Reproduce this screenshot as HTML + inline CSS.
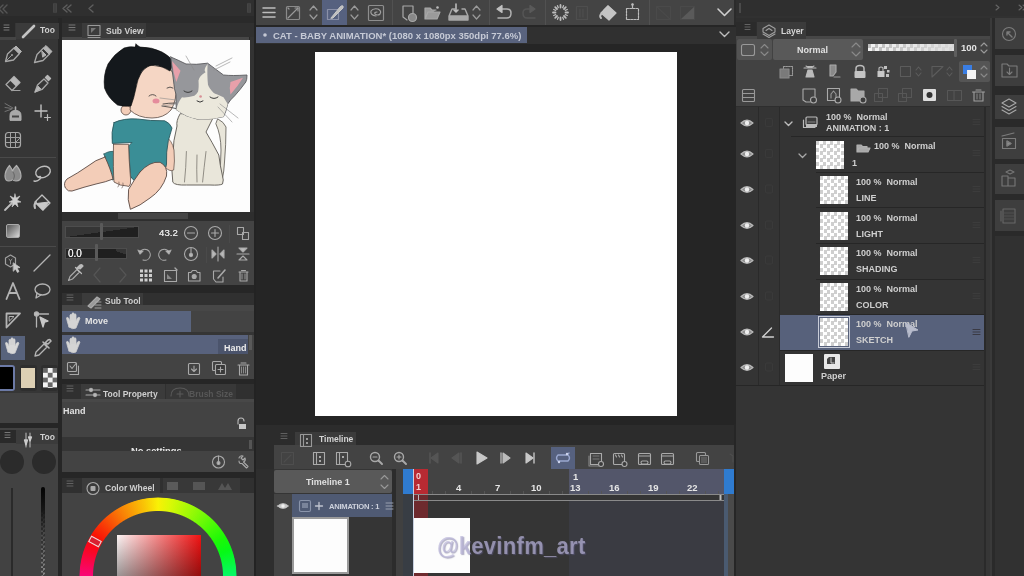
<!DOCTYPE html>
<html><head><meta charset="utf-8">
<style>
*{margin:0;padding:0;box-sizing:border-box}
html,body{width:1024px;height:576px;overflow:hidden;background:#2b2b2b;font-family:"Liberation Sans",sans-serif;color:#d8d8d8}
.a{position:absolute}
.t{position:absolute;white-space:nowrap;font-size:10px;line-height:1;will-change:transform}
svg{position:absolute;overflow:visible}
</style></head><body>
<!-- ===== top strip left ===== -->
<div class="a" style="left:0;top:0;width:256px;height:16px;background:#2f2f2f"></div>
<div class="a" style="left:0;top:16px;width:256px;height:7px;background:#2a2a2a"></div>
<!-- tool panel -->
<div class="a" style="left:0;top:23px;width:58px;height:400px;background:#363636"></div>
<div class="a" style="left:58px;top:18px;width:4px;height:558px;background:#262626"></div>
<!-- sub view panel -->
<div class="a" style="left:62px;top:23px;width:192px;height:262px;background:#434343"></div>
<div class="a" style="left:62px;top:23px;width:192px;height:14px;background:#303030"></div>
<div class="a" style="left:62px;top:37px;width:188px;height:3px;background:#474747"></div>
<div class="a" style="left:249px;top:37px;width:5px;height:176px;background:#333333"></div>
<div class="a" style="left:249px;top:37px;width:1px;height:176px;background:#2a2a2a"></div>
<div class="a" style="left:62px;top:40px;width:188px;height:172px;background:#fdfdfd"></div>
<div class="a" style="left:62px;top:212px;width:192px;height:9px;background:#2e2e2e"></div>
<!-- sub tool panel -->
<div class="a" style="left:62px;top:285px;width:192px;height:8px;background:#262626"></div>
<div class="a" style="left:62px;top:293px;width:192px;height:86px;background:#434343"></div>
<div class="a" style="left:62px;top:293px;width:192px;height:12px;background:#303030"></div>
<div class="a" style="left:62px;top:311px;width:129px;height:21px;background:#59647e"></div>
<div class="a" style="left:62px;top:335px;width:186px;height:19px;background:#58627d"></div>
<!-- tool property -->
<div class="a" style="left:62px;top:379px;width:192px;height:5px;background:#262626"></div>
<div class="a" style="left:62px;top:384px;width:192px;height:88px;background:#434343"></div>
<div class="a" style="left:62px;top:384px;width:192px;height:15px;background:#303030"></div>
<div class="a" style="left:62px;top:437px;width:192px;height:14px;background:#353535"></div>
<!-- color wheel -->
<div class="a" style="left:62px;top:472px;width:192px;height:6px;background:#262626"></div>
<div class="a" style="left:62px;top:478px;width:192px;height:98px;background:#434343"></div>
<div class="a" style="left:62px;top:478px;width:192px;height:15px;background:#303030"></div>
<!-- left bottom panel -->
<div class="a" style="left:0;top:423px;width:58px;height:5px;background:#262626"></div>
<div class="a" style="left:0;top:428px;width:58px;height:148px;background:#424242"></div>

<!-- ===== canvas area ===== -->
<div class="a" style="left:254px;top:0;width:2px;height:576px;background:#232323"></div>
<div class="a" style="left:256px;top:0;width:478px;height:26px;background:#444444"></div>
<div class="a" style="left:256px;top:26px;width:480px;height:18px;background:#303030"></div>
<div class="a" style="left:256px;top:27px;width:271px;height:16px;background:#59637e"></div>
<div class="a" style="left:256px;top:44px;width:480px;height:381px;background:#252525"></div>
<div class="a" style="left:315px;top:52px;width:362px;height:363.5px;background:#ffffff"></div>

<!-- ===== timeline ===== -->
<div class="a" style="left:256px;top:425px;width:480px;height:151px;background:#2c2c2c"></div>
<div class="a" style="left:274px;top:445px;width:461px;height:24px;background:#434343"></div>
<div class="a" style="left:274px;top:469px;width:461px;height:107px;background:#343434"></div>
<div class="a" style="left:274px;top:470px;width:118px;height:23px;background:#4a4a4a"></div>

<!-- ===== layer panel ===== -->
<div class="a" style="left:736px;top:0;width:288px;height:16px;background:#2f2f2f"></div><div class="a" style="left:736px;top:16px;width:288px;height:2px;background:#313131"></div>
<div class="a" style="left:736px;top:18px;width:257px;height:558px;background:#333333"></div>
<div class="a" style="left:736px;top:18px;width:257px;height:21px;background:#2e2e2e"></div>
<div class="a" style="left:736px;top:39px;width:254px;height:68px;background:#424242"></div>
<div class="a" style="left:780px;top:315px;width:205px;height:35px;background:#57617b"></div>
<!-- right column -->
<div class="a" style="left:990px;top:18px;width:34px;height:558px;background:#262626"></div>


<!-- ===== left tool column ===== -->
<div class="a" style="left:0;top:23px;width:15px;height:14px;background:#2a2a2a"></div>
<div class="a" style="left:16px;top:23px;width:43px;height:16px;background:#3b3b3b"></div>
<div class="a" style="left:0;top:37px;width:16px;height:3px;background:#444"></div>
<div class="t" style="left:40px;top:26px;font-size:8.5px;font-weight:bold;color:#cfcfcf;width:18px;overflow:hidden">Too</div>
<div class="a" style="left:1px;top:336px;width:24px;height:24px;background:#58637c"></div>
<div class="a" style="left:0;top:365px;width:15px;height:26px;background:#000;border:2px solid #6c7aa6;border-left:none;border-radius:0 3px 3px 0"></div>
<div class="a" style="left:20px;top:365px;width:17px;height:26px;background:#2e2e2e;border-radius:3px"></div>
<div class="a" style="left:21px;top:368px;width:14px;height:20px;background:#ddd0b4"></div>
<div class="a" style="left:41px;top:365px;width:17px;height:26px;background:#2e2e2e;border-radius:3px"></div>
<div class="a" style="left:43px;top:368px;width:14px;height:20px;background:repeating-conic-gradient(#f4f4f4 0 25%,#666 0 50%) 0 0/9.6px 9.6px"></div>
<div class="a" style="left:0;top:393px;width:58px;height:30px;background:#434343"></div>
<div class="a" style="left:0;top:157px;width:56px;height:1px;background:#4a4a4a"></div>
<div class="a" style="left:0;top:246px;width:56px;height:1px;background:#4a4a4a"></div>
<svg class="a" style="left:0;top:0" width="1024" height="576" viewBox="0 0 1024 576" fill="none" stroke="#bdbdbd" stroke-width="1.4" stroke-linecap="round" stroke-linejoin="round">
 <!-- top chevrons/grips -->
 <path d="M3 5 L-1 9 L3 13 M7 5 L3 9 L7 13" stroke="#555"/>
 <rect x="53" y="3" width="4" height="10" rx="1" fill="#454545" stroke="none"/><path d="M55 3 V13" stroke="#3a3a3a" stroke-width="0.8"/>
 <path d="M67 5 L63 8.5 L67 12 M71 5 L67 8.5 L71 12" stroke="#5e5e5e"/>
 <path d="M93 5 L89 8.5 L93 12" stroke="#5e5e5e"/>
 <rect x="247" y="3" width="4" height="10" rx="1" fill="#454545" stroke="none"/><path d="M249 3 V13" stroke="#3a3a3a" stroke-width="0.8"/>
 <path d="M4 25 H9 M4 27.5 H9 M4 30 H9" stroke="#777" stroke-width="1"/>
 <path d="M23 37 L34 26" stroke="#c4c4c4" stroke-width="2.6"/>
 <path d="M69 25 H75 M69 27.5 H75 M69 30 H75" stroke="#777" stroke-width="1"/>
 <!-- pen1 -->
 <path d="M5.5 61.5 L7.5 54 L14 48 L19.5 53.5 L13.5 60 Z" stroke="#a8a8a8" stroke-width="1.3"/>
 <path d="M14 48 L16 46 L21.5 51.5 L19.5 53.5 Z" fill="#b0b0b0" stroke="#b0b0b0" stroke-width="1"/>
 <path d="M6 61 L11.5 55.5" stroke="#a0a0a0" stroke-width="1"/><circle cx="12" cy="55" r="1" fill="#a0a0a0" stroke="none"/>
 <!-- pen2 -->
 <path d="M34.5 62.5 L37 54.5 L43.5 48 L49.5 54 L43 60.5 Z" stroke="#a8a8a8" stroke-width="1.3"/>
 <path d="M43.5 48 L46 45.5 L52 51.5 L49.5 54 Z M42 51 L46 55 L43 57 Z" fill="#b4b4b4" stroke="#b4b4b4" stroke-width="1"/>
 <!-- eraser -->
 <path d="M6 84.5 L14 76.5 L20 82.5 L12 90.5 Z" stroke="#a8a8a8" stroke-width="1.3"/>
 <path d="M10 80.5 L14 76.5 L20 82.5 L16 86.5 Z" fill="#b8b8b8" stroke="none"/>
 <path d="M12 90.5 H20" stroke="#a0a0a0" stroke-width="1.2"/>
 <!-- pen3 -->
 <path d="M35 92 L37.5 85 L44 79 L48 83 L42 89.5 Z" stroke="#a8a8a8" stroke-width="1.3"/>
 <path d="M45.5 77.5 L47.5 75.5 L50.5 78.5 L48.5 80.5 Z" fill="#b8b8b8" stroke="#b8b8b8"/>
 <path d="M35 92 L38 86 L41 89 Z" fill="#b8b8b8" stroke="#b8b8b8" stroke-width="0.8"/>
 <!-- airbrush -->
 <path d="M10 120 V115.5 Q10 110.5 15.5 110.5 Q21 110.5 21 115.5 V120 Z" fill="#a8a8a8" stroke="#b0b0b0" stroke-width="1"/>
 <rect x="12" y="115.5" width="7" height="2" fill="#444" stroke="none"/>
 <path d="M15.5 107 V110" stroke="#b0b0b0" stroke-width="1.6"/>
 <path d="M5 103.5 L13 108 M5 107.5 L12 108.5 M5 111.5 L12 109" stroke="#7a7a7a" stroke-width="0.9"/>
 <!-- sparkle -->
 <path d="M41 105 V117 M35 111 H47" stroke="#c0c0c0" stroke-width="1.4"/>
 <path d="M47.5 114.5 V120.5 M44.5 117.5 H50.5" stroke="#b8b8b8" stroke-width="1.2"/>
 <!-- grid -->
 <rect x="5.5" y="132.5" width="15" height="15" rx="3" stroke="#a8a8a8" stroke-width="1.2"/>
 <path d="M10.5 133 V147 M15.5 133 V147 M6 137.5 H20 M6 142.5 H20" stroke-width="1" stroke="#a0a0a0"/>
 <path d="M15.5 142.5 L20 138" stroke="#a0a0a0" stroke-width="1"/>
 <!-- blend -->
 <path d="M5 176 Q5 171 9.5 165.5 Q12 169 12.5 171 Q13.5 168.5 16.5 165.5 Q21 171 21 176 Q21 181 16 181 Q13.5 181 12.5 179.5 Q11.5 181 9 181 Q5 181 5 176 Z" fill="#8a8a8a" stroke="#b0b0b0" stroke-width="1.2"/>
 <path d="M13 172 Q16 176 13 180" stroke="#5a5a5a" stroke-width="0.8"/>
 <!-- lasso -->
 <ellipse cx="43" cy="172" rx="7.5" ry="5.5" transform="rotate(-20 43 172)"/>
 <path d="M38 177 Q42 175 40 179 Q37 182 34 181" />
 <!-- wand -->
 <path d="M5 210 L12 203" stroke-width="1.8"/>
 <path d="M15 194 L16 198 L20 196 L17 200 L21 202 L17 202.5 L18 207 L15 204 L12 207 L13 202.5 L9 202 L13 200 L10 196 L14 198 Z" fill="#d0d0d0" stroke="#d0d0d0" stroke-width="0.6"/>
 <!-- bucket -->
 <path d="M42 195 L50 203 L43 210 L35 202 Z" stroke="#c0c0c0" stroke-width="1.3"/>
 <path d="M36.5 203.5 L49 202 L43 210 Z" fill="#c8c8c8" stroke="#c8c8c8" stroke-width="1"/>
 <path d="M36 202 Q33.5 205 35 208" stroke="#c0c0c0" stroke-width="2"/>
</svg>

<!-- left col part 2 -->
<div class="a" style="left:6px;top:224px;width:14px;height:14px;border-radius:2px;background:linear-gradient(135deg,#555 0%,#9a9a9a 55%,#d8d8d8 100%);border:1px solid #aaa"></div>
<div class="a" style="left:0;top:430px;width:16px;height:13px;background:#2a2a2a"></div>
<div class="a" style="left:16px;top:430px;width:42px;height:14px;background:#3b3b3b"></div>
<div class="t" style="left:40px;top:433px;font-size:8.5px;font-weight:bold;color:#cfcfcf;width:18px;overflow:hidden">Too</div>
<div class="a" style="left:0px;top:450px;width:24px;height:24px;border-radius:50%;background:#2b2b2b"></div>
<div class="a" style="left:31.5px;top:450px;width:24px;height:24px;border-radius:50%;background:#2b2b2b"></div>
<div class="a" style="left:10.5px;top:488px;width:2.5px;height:88px;background:#2a2a2a"></div>
<div class="a" style="left:40.5px;top:487px;width:4.5px;height:89px;border-radius:2px;background:linear-gradient(#030303 0%,#151515 25%,rgba(40,40,40,.6) 55%,rgba(60,60,60,0) 100%),repeating-conic-gradient(#8a8a8a 0 25%,#3e3e3e 0 50%) 0 0/4.5px 4.5px"></div>
<svg class="a" style="left:0;top:0" width="1024" height="576" viewBox="0 0 1024 576" fill="none" stroke="#b4b4b4" stroke-width="1.3" stroke-linecap="round" stroke-linejoin="round">
 <path d="M5 432.5 H10 M5 435 H10 M5 437.5 H10" stroke="#777" stroke-width="1"/>
 <path d="M26 433 V447 M30 433 V447" stroke="#aaa" stroke-width="1.2"/>
 <path d="M24.5 440 L26 445 L27.5 440 Z M28.5 437 L30 441 L31.5 437Z" fill="#ccc" stroke="#ccc"/>
 <!-- figure -->
 <path d="M10.5 255 L15.5 258 L15.5 264 L10.5 267 L5.5 264 L5.5 258 Z" stroke="#a0a0a0" stroke-width="1.2"/>
 <path d="M9 259 L10.5 261 L12 259 M10.5 261 V264" stroke="#999" stroke-width="0.9"/>
 <path d="M13.5 263 L20 267.5 L17 268 L19 271.5 L17.5 272.5 L15.5 269 L13.5 271 Z" fill="#c8c8c8" stroke="#c8c8c8" stroke-width="0.8"/>
 <!-- line -->
 <path d="M34 271 L50 255"/>
 <!-- A -->
 <path d="M6.5 299 L13 283 L19.5 299 M9 293 H17" stroke-width="1.8"/>
 <!-- bubble -->
 <ellipse cx="42.5" cy="289.5" rx="7.5" ry="5.5"/>
 <path d="M37 293 L36 298 L41 295"/>
 <!-- ruler -->
 <path d="M6.5 313.5 H20 L6.5 327.5 Z" stroke-width="1.8"/>
 <path d="M9.5 316.5 H14 L9.5 321 Z" stroke-width="1"/>
 <!-- ruler select -->
 <circle cx="36.5" cy="314" r="2" fill="#bbb"/>
 <path d="M36.5 316 V327 M38 314 H48.5" />
 <path d="M40 317 L48 321 L44.5 322 L43 327 Z" fill="#c8c8c8" stroke="#c8c8c8"/>
 <!-- hand -->
 <path d="M8 352 Q6 346 5.5 343 Q6 341.5 7.5 343 L9 346 V340 Q10 338.5 11 340 V345 V338.5 Q12 337 13 338.5 V345 V339.5 Q14 338 15 339.5 V346 L16.5 343 Q18 341.5 19 343 Q17 348 15 353 Q12 355 8 352 Z" fill="#d8d8d8" stroke="#d0d0d0" stroke-width="0.8"/>
 <!-- eyedropper -->
 <path d="M35 356 L36 352 L44 344 L47 347 L39 355 Z"/>
 <path d="M45 343 L48 340 Q50 339 51 341 L48 344 Z M43 342 L49 348" stroke-width="1.6"/>
</svg>

<!-- ===== sub view illustration ===== -->
<svg class="a" style="left:0;top:0" width="1024" height="576" viewBox="0 0 1024 576" stroke-linejoin="round" stroke-linecap="round">
 <!-- cat tail -->
 <path d="M218 119 Q224 122 226 127 Q226 145 224.5 162 Q224 172 222.5 178 L219 176 Q221 165 221 150 Q221 135 216 124 Z" fill="#e9e6da" stroke="#6a6660" stroke-width="0.9"/>
 <!-- cat body -->
 <path d="M180 114 Q176 121 177 126 Q173 140 172.8 157 Q171 170 172.8 182.2 Q175 185.5 186.4 185 L210 185 Q220 185.5 222.5 184 Q224 180 222.5 176 Q220 165 218.8 155 Q212 142 206 132 Q210 124 214 116 Z" fill="#e9e6da" stroke="#6a6660" stroke-width="1"/>
 <path d="M186.4 151.5 Q186 168 184.5 182 M197 155 Q196.5 170 197 182 M206 151.5 Q204 168 202.6 182" fill="none" stroke="#7a766e" stroke-width="0.8"/>
 <!-- right arm behind -->
 <path d="M166 137 Q172 140 174 150 Q175 162 173.7 170 Q170 172 166 168 Z" fill="#f3cdb8" stroke="#5a4a44" stroke-width="0.7"/>
 <!-- shorts -->
 <path d="M104 154 Q110 150 116 152 L118 178 L112 180 Q107 166 104 154Z" fill="#3a8e96" stroke="#2d5a60" stroke-width="0.8"/>
 <!-- left leg -->
 <path d="M105 157 Q95 160 88 166 Q78 173 67 179 Q63 183 65.4 188 Q68 192 72 191 Q84 187 96 184 Q106 182 113 179 Q111 170 105 157 Z" fill="#f3cdb8" stroke="#5a4a44" stroke-width="0.9"/>
 <!-- shirt -->
 <path d="M114 122.6 Q124 118 137.6 119 Q150 121 164.7 120.8 Q170 123 172 128 Q170 135 168.3 140.7 Q166 152 166.5 164 Q166 170 160 172 Q148 176 137.6 182.2 Q132 180 130.4 176 L128.6 146 L132 142.5 L112.3 143.4 Q111 132 114 122.6 Z" fill="#3a8e96" stroke="#2d5a60" stroke-width="0.9"/>
 <!-- right leg -->
 <path d="M140 172 Q150 161 160 162.3 Q168 166 166.5 176 Q162 190 150 198 Q140 206 130.4 209.3 Q127 200 128.6 189.4 Q134 180 140 172 Z" fill="#f3cdb8" stroke="#5a4a44" stroke-width="0.9"/>
 <!-- arm -->
 <path d="M113.5 144.3 L128.6 144.3 Q129 160 130 172 Q131 180 130.4 184 Q129 188 127 186 Q120 186 114 182 Q113 170 113.5 144.3Z" fill="#f3cdb8" stroke="#5a4a44" stroke-width="0.8"/>
 <path d="M119 182 Q120 185 118 187 M123 183 Q124 186 122 188" fill="none" stroke="#5a4a44" stroke-width="0.6"/>
 <!-- ear -->
 <circle cx="126" cy="110" r="5" fill="#f3cdb8" stroke="#5a4a44" stroke-width="0.8"/>
 <!-- face -->
 <path d="M134 88 Q138 72 150 65 L170 68 Q176 76 176 86 Q177 100 171 110 Q164 118 152 118 Q138 118 130 110 Q131 98 134 88 Z" fill="#f5d6c4" stroke="#5a4a44" stroke-width="0.8"/>
 <!-- hair -->
 <path d="M136 44 Q138 46 140 47 Q152 47 162 52 Q170 56 173 62 Q172 68 170 71 Q162 66 155 65 Q147 65 142 71 Q137 80 136 88 Q134 98 131 106 Q124 107 117.5 105 Q108 98 104.5 88 Q103 75 108 64 Q114 54 124 48 Q130 46 135 47 Z" fill="#14181c" stroke="#0a0a0a" stroke-width="0.6"/>
 <!-- eyes/cheeks -->
 <path d="M149 96 Q152.5 93 156 96 M167 88 Q170 86 173 88 M163 104 Q168 103 176 103 M162 106 Q170 107 178 109" fill="none" stroke="#333" stroke-width="0.8"/>
 <ellipse cx="156" cy="101" rx="3.5" ry="2.5" fill="#e58c9c"/>
 <!-- cat head -->
 <path d="M170.8 57 Q178 60 186 64 Q196 65 207.6 63.2 Q214 68 223.5 75 Q232 76 247 75 Q247 80 245.8 82 Q240 90 234.7 95.8 Q230 100 227.7 104 Q226 112 223.5 116.7 Q210 120 197 119 Q186 117 176.3 109.7 Q176 102 176 94.4 Q174 88 174 84.7 Q172 70 170.8 57 Z" fill="#96979b" stroke="#5a5a5e" stroke-width="0.9"/>
 <path d="M207.6 64 Q203 70 205.5 72.2 Q199 76 198.5 80.5 Q199 88 198 91.7 Q196 95 194.4 95.8 Q186 98 182 97.2 Q178 102 176.3 109.7 Q186 117 197 119 Q210 120 223.5 116.7 Q226 110 227.7 104 Q224 98 223.5 97.2 Q216 94 213.8 93 Q209 88 208 84.7 Q207 76 207.6 64 Z" fill="#ebe8dc"/>
 <path d="M172 61 L180.5 70.8 L176.3 82 Q173 72 172 61 Z M243 77.8 L230.5 82 Q229 88 230.5 94.4 Q238 86 243 77.8 Z" fill="#e8a0aa"/>
 <path d="M184 91 Q188 94 192 91 M210 97 Q214 100 218 97 M197 101 Q200 103.5 203 101" fill="none" stroke="#3a3a3a" stroke-width="1"/>
 <circle cx="200.6" cy="96.5" r="1.3" fill="#d89096"/>
 <path d="M186 56 L194 70 M214 70 L230 62 M216 66 L232 58 M220 104 L238 118 M218 107 L232 122 M176 100 L160 98 M176 104 L162 106" fill="none" stroke="#8a8a8a" stroke-width="0.6"/>
</svg>

<!-- ===== sub view tab & controls ===== -->
<div class="a" style="left:82px;top:23px;width:64px;height:15px;background:#3b3b3b"></div>
<div class="t" style="left:106px;top:27px;font-size:8.5px;font-weight:bold;color:#cfcfcf">Sub View</div>
<div class="a" style="left:118px;top:213px;width:70px;height:6px;background:#454545"></div>
<div class="a" style="left:65px;top:226px;width:74px;height:12px;border:1px solid #4d4d4d;background:#353535"></div>
<div class="a" style="left:66px;top:227px;width:72px;height:10px;background:linear-gradient(to bottom right,transparent 50%,#202020 50%)"></div>
<div class="a" style="left:100px;top:223px;width:3px;height:17px;background:#5a5a5a;border-radius:1px"></div>
<div class="a" style="left:65px;top:248px;width:62px;height:11px;border:1px solid #4d4d4d;background:#353535"></div>
<div class="a" style="left:98px;top:249px;width:28px;height:9px;background:linear-gradient(to bottom left,transparent 30%,#1f1f1f 30%)"></div>
<div class="a" style="left:98px;top:249px;width:18px;height:9px;background:#1f1f1f"></div>
<div class="a" style="left:66px;top:249px;width:30px;height:9px;background:#262626"></div>
<div class="a" style="left:95px;top:244px;width:3px;height:17px;background:#5a5a5a;border-radius:1px"></div>
<div class="t" style="left:68px;top:249px;font-size:10px;color:#ececec;text-shadow:0 0 0.4px #fff">0.0</div>
<div class="t" style="left:158.5px;top:227.5px;font-size:9.7px;color:#e0e0e0;text-shadow:0 0 0.4px #fff">43.2</div>
<div class="a" style="left:229px;top:225px;width:1px;height:18px;background:#4a4a4a"></div>
<div class="a" style="left:206px;top:247px;width:1px;height:16px;background:#4a4a4a"></div>
<svg class="a" style="left:0;top:0" width="1024" height="576" viewBox="0 0 1024 576" fill="none" stroke="#a9a9a9" stroke-width="1.1" stroke-linecap="round" stroke-linejoin="round">
 <!-- sub view tab icon -->
 <rect x="88" y="25.5" width="12" height="10" stroke="#999"/><path d="M88 37.5 H100" stroke="#999"/>
 <path d="M91 28 V33 L96 28 Z" fill="#777" stroke="none"/>
 <!-- row1 -->
 <circle cx="191" cy="233" r="6.5"/><path d="M187.5 233 H194.5"/>
 <circle cx="215" cy="233" r="6.5"/><path d="M211.5 233 H218.5 M215 229.5 V236.5"/>
 <rect x="237.5" y="227.5" width="6" height="7"/><rect x="242.5" y="232.5" width="6" height="7"/>
 <!-- row2 -->
 <path d="M140 252 A5.5 5.5 0 1 1 143 260" /><path d="M138 250 L140 254 L143 251" fill="#bbb"/>
 <path d="M169 252 A5.5 5.5 0 1 0 166 260" /><path d="M171 250 L169 254 L166 251" fill="#bbb"/>
 <circle cx="191" cy="254" r="6.5"/><circle cx="191" cy="255" r="1.6" fill="#bbb"/><path d="M191 248 V254"/>
 <path d="M212 250 L216 254 L212 258 Z M224 250 L220 254 L224 258 Z" fill="#bbb"/><path d="M218 247 V261"/>
 <path d="M239 248 H247 L243 252 Z" fill="#bbb"/><path d="M237 254 H249"/><path d="M239 260 H247 L243 256 Z"/>
 <!-- row3 -->
 <path d="M68.5 280.5 L70 276.5 L77 269.5 L79.5 272 L72.5 279 Z" stroke="#aaa" stroke-width="1.1"/><path d="M77 268 L80 265 Q82 264 83 266 L80 269 Z M75.5 267.5 L81.5 273.5" fill="#bbb" stroke="#bbb" stroke-width="1.2"/>
 <path d="M100 268 L94 275 L100 282 M120 268 L126 275 L120 282" stroke="#555" stroke-width="1.2"/>
 <g fill="#cfcfcf" stroke="none"><rect x="140" y="269.5" width="3" height="3"/><rect x="144.5" y="269.5" width="3" height="3"/><rect x="149" y="269.5" width="3" height="3"/><rect x="140" y="274" width="3" height="3"/><rect x="144.5" y="274" width="3" height="3"/><rect x="149" y="274" width="3" height="3"/><rect x="140" y="278.5" width="3" height="3"/><rect x="144.5" y="278.5" width="3" height="3"/><rect x="149" y="278.5" width="3" height="3"/></g>
 <rect x="164.5" y="270.5" width="12" height="11"/><path d="M167 279 V274 L172 279 Z" fill="#888" stroke="none"/><path d="M175 268 L177 270" stroke-width="1.4"/>
 <path d="M188.5 272.5 H191 L192.5 270.5 H196 L197.5 272.5 H200 V281 H188.5 Z"/><circle cx="194.2" cy="276.5" r="2" fill="#aaa"/>
 <path d="M214 271 H220 M213.5 271 V279 L216 282 H223 V277"/><path d="M218 278 L225 270" stroke-width="1.6"/>
 <path d="M239 272 H248 M240 272 V281 H247 V272 M241.5 270.5 H245.5"/><path d="M242 274 V279 M245 274 V279" stroke-width="0.8"/>
</svg>

<!-- ===== sub tool ===== -->
<div class="a" style="left:82px;top:293px;width:61px;height:13px;background:#3b3b3b"></div>
<div class="t" style="left:105px;top:297px;font-size:8.5px;font-weight:bold;color:#cfcfcf">Sub Tool</div>
<div class="a" style="left:62px;top:305px;width:192px;height:6px;background:#474747"></div>
<div class="a" style="left:62px;top:332px;width:192px;height:3px;background:#353535"></div>
<div class="t" style="left:85px;top:317px;font-size:9px;font-weight:bold;color:#e4e4e4">Move</div>
<div class="a" style="left:218px;top:339px;width:30px;height:15px;background:#4b546c"></div>
<div class="t" style="left:223.5px;top:343.5px;font-size:9px;font-weight:bold;color:#ececec">Hand</div>
<div class="a" style="left:249px;top:335px;width:3px;height:15px;background:#5a5a5a"></div>
<!-- tool property -->
<div class="a" style="left:81px;top:384px;width:84px;height:15px;background:#3b3b3b"></div>
<div class="a" style="left:166px;top:384px;width:70px;height:15px;background:#383838"></div>
<div class="t" style="left:103px;top:390px;font-size:8.5px;font-weight:bold;color:#cfcfcf">Tool Property</div>
<div class="t" style="left:189px;top:390px;font-size:8.5px;font-weight:bold;color:#575757">Brush Size</div>
<div class="a" style="left:62px;top:399px;width:192px;height:3px;background:#484848"></div>
<div class="t" style="left:63px;top:407px;font-size:9px;font-weight:bold;color:#e0e0e0">Hand</div>
<div class="a" style="left:62px;top:437px;width:192px;height:14px;overflow:hidden"><div class="t" style="left:69px;top:10px;font-size:9.3px;font-weight:bold;color:#e8e8e8">No settings</div></div>
<div class="a" style="left:249px;top:440px;width:3px;height:9px;background:#555"></div>
<!-- color wheel -->
<div class="a" style="left:82px;top:478px;width:78px;height:15px;background:#3b3b3b"></div>
<div class="a" style="left:163px;top:478px;width:77px;height:15px;background:#383838"></div>
<div class="t" style="left:105px;top:484px;font-size:8.5px;font-weight:bold;color:#cfcfcf">Color Wheel</div>
<div class="a" style="left:62px;top:478px;width:192px;height:98px;overflow:hidden;pointer-events:none">
  <div class="a" style="left:17.3px;top:19.3px;width:157.4px;height:157.4px;border-radius:50%;background:conic-gradient(hsl(58,95%,50%) 0deg,hsl(68,95%,50%) 10deg,hsl(77,95%,50%) 20deg,hsl(86,95%,50%) 30deg,hsl(96,95%,50%) 40deg,hsl(106,95%,50%) 50deg,hsl(115,95%,50%) 60deg,hsl(124,95%,50%) 70deg,hsl(134,95%,50%) 80deg,hsl(144,95%,50%) 90deg,hsl(153,95%,50%) 100deg,hsl(162,95%,50%) 110deg,hsl(172,95%,50%) 120deg,hsl(182,95%,50%) 130deg,hsl(191,95%,50%) 140deg,hsl(200,95%,50%) 150deg,hsl(210,95%,50%) 160deg,hsl(220,95%,50%) 170deg,hsl(229,95%,50%) 180deg,hsl(256,95%,50%) 190deg,hsl(266,95%,50%) 200deg,hsl(276,95%,50%) 210deg,hsl(285,95%,50%) 220deg,hsl(294,95%,50%) 230deg,hsl(304,95%,50%) 240deg,hsl(314,95%,50%) 250deg,hsl(323,95%,50%) 260deg,hsl(332,95%,50%) 270deg,hsl(342,95%,50%) 280deg,hsl(352,95%,50%) 290deg,hsl(1,95%,50%) 300deg,hsl(10,95%,50%) 310deg,hsl(20,95%,50%) 320deg,hsl(30,95%,50%) 330deg,hsl(39,95%,50%) 340deg,hsl(48,95%,50%) 350deg,hsl(58,95%,50%) 360deg);-webkit-mask:radial-gradient(circle,transparent 64.5px,#000 65.5px,#000 78px,transparent 79px);mask:radial-gradient(circle,transparent 64.5px,#000 65.5px,#000 78px,transparent 79px)"></div>
  <div class="a" style="left:54.5px;top:56.5px;width:84px;height:45px;background:linear-gradient(to bottom,rgba(0,0,0,0),rgba(0,0,0,.42)),linear-gradient(to right,#fbf4f4,#f01212)"></div>
</div>
<div class="a" style="left:89px;top:538px;width:12px;height:7px;border:1.5px solid #f0d8d8;background:#d82030;transform:rotate(28deg)"></div>
<svg class="a" style="left:0;top:0" width="1024" height="576" viewBox="0 0 1024 576" fill="none" stroke="#a9a9a9" stroke-width="1.1" stroke-linecap="round" stroke-linejoin="round">
 <path d="M67 295 H73 M67 297.5 H73 M67 300 H73" stroke="#666" stroke-width="0.9"/>
 <path d="M88 306 L97 297 L100 299 L91 308 Z" fill="#999"/><path d="M95 302 H101 M95 305 H101 M95 308 H101" stroke-width="0.9"/>
 <!-- move hand -->
 <g transform="translate(61,-25)" fill="#d4d4d4" stroke="#cfcfcf" stroke-width="0.8"><path d="M8 352 Q6 346 5.5 343 Q6 341.5 7.5 343 L9 346 V340 Q10 338.5 11 340 V345 V338.5 Q12 337 13 338.5 V345 V339.5 Q14 338 15 339.5 V346 L16.5 343 Q18 341.5 19 343 Q17 348 15 353 Q12 355 8 352 Z"/></g>
 <g transform="translate(61,-1)" fill="#d4d4d4" stroke="#cfcfcf" stroke-width="0.8"><path d="M8 352 Q6 346 5.5 343 Q6 341.5 7.5 343 L9 346 V340 Q10 338.5 11 340 V345 V338.5 Q12 337 13 338.5 V345 V339.5 Q14 338 15 339.5 V346 L16.5 343 Q18 341.5 19 343 Q17 348 15 353 Q12 355 8 352 Z"/></g>
 <!-- subtool bottom icons -->
 <rect x="67.5" y="362.5" width="9" height="9" rx="1"/><path d="M70 366 L72 368.5 L76 363.5"/><path d="M78.5 366 V374.5 H70"/>
 <rect x="188.5" y="363.5" width="11" height="11" rx="1"/><path d="M194 366 V371 M191.5 369 L194 371.5 L196.5 369"/>
 <rect x="212.5" y="361.5" width="9" height="9" rx="1"/><rect x="215.5" y="364.5" width="10" height="10" rx="1" fill="#3a3a3a"/><path d="M220.5 367 V372 M218 369.5 H223"/>
 <path d="M238 365 H249 M239.5 365 V375 H247.5 V365 M241 363 H246"/><path d="M241.5 367 V373 M243.5 367 V373 M245.5 367 V373" stroke-width="0.7"/>
 <!-- tool prop icons -->
 <path d="M67 386 H73 M67 388.5 H73 M67 391 H73" stroke="#666" stroke-width="0.9"/>
 <path d="M86 390 H100 M86 395 H100" /><circle cx="91" cy="390" r="1.6" fill="#bbb"/><circle cx="95" cy="395" r="1.6" fill="#bbb"/>
 <path d="M171 396 Q171 388 180 388 Q189 388 189 396" stroke="#5a5a5a"/><path d="M177 394 H183 M180 391 V397" stroke="#5a5a5a"/>
 <path d="M238 424 V421 Q238 418 241 418 Q244 418 244 421" stroke="#bbb"/><rect x="239" y="424" width="7" height="5" fill="#c8c8c8" stroke="none"/>
 <circle cx="218.5" cy="462" r="6"/><circle cx="218.5" cy="463" r="1.5" fill="#bbb"/><path d="M218.5 456 V462"/>
 <path d="M239 458 Q240 455 243 456 L241 458 L243 460 L245 458 Q246 461 243.5 462 L248 466.5 L246.5 468 L242 463.5 Q239 464 239 461" />
 <!-- color wheel tab icons -->
 <path d="M67 481 H73 M67 483.5 H73 M67 486 H73" stroke="#666" stroke-width="0.9"/>
 <circle cx="93" cy="488.5" r="6"/><rect x="90.5" y="486" width="5" height="5" rx="1" fill="#aaa" stroke="none"/>
 <rect x="167" y="482" width="11" height="8" fill="#5a5a5a" stroke="none"/><rect x="193" y="482" width="12" height="8" fill="#555" stroke="none"/>
 <path d="M218 490 L222 483 L225 488 L228 483 L232 490 Z" fill="#555" stroke="none"/>
</svg>

<!-- ===== canvas toolbar ===== -->
<div class="a" style="left:322px;top:0;width:25px;height:25px;background:#56617f"></div>
<div class="a" style="left:256px;top:25px;width:480px;height:2px;background:#262626"></div>
<div class="a" style="left:392px;top:0;width:1px;height:25px;background:#515151"></div>
<div class="a" style="left:489px;top:0;width:1px;height:25px;background:#515151"></div>
<div class="a" style="left:545px;top:0;width:1px;height:25px;background:#515151"></div>
<div class="a" style="left:649px;top:0;width:1px;height:25px;background:#515151"></div>
<div class="t" style="left:273px;top:30.5px;font-size:9.5px;font-weight:bold;color:#c6cad6">CAT - BABY ANIMATION* (1080 x 1080px 350dpi 77.6%)</div>
<svg class="a" style="left:0;top:0" width="1024" height="576" viewBox="0 0 1024 576" fill="none" stroke="#a8a8a8" stroke-width="1.2" stroke-linecap="round" stroke-linejoin="round">
 <circle cx="265" cy="35" r="1.8" fill="#c4c8d4" stroke="none"/>
 <path d="M263 8 H275 M263 12.5 H275 M263 17 H275" stroke="#bdbdbd" stroke-width="1.5"/>
 <rect x="286.5" y="6.5" width="13" height="13" rx="1" stroke="#8a8a8a"/><path d="M288 18 L298 8 M288 8 L289 9" stroke="#999"/><path d="M295 8 H298 V11" stroke="#999"/>
 <path d="M310 10 L313.5 6 L317 10 M310 15 L313.5 19 L317 15" stroke="#9a9a9a"/>
 <rect x="327.5" y="9.5" width="11" height="10" stroke="#8a90a8"/><path d="M331 18 L340 7 Q342 5 343 6 Q344 8 341 10 L333 18 Z" fill="#c0c0c0" stroke="#c8c8c8" stroke-width="1"/>
 <path d="M351 10 L354.5 6 L358 10 M351 15 L354.5 19 L358 15" stroke="#9a9a9a"/>
 <rect x="368.5" y="5.5" width="15" height="15" rx="1" stroke="#8e8e8e"/><path d="M376 16 Q370 15 371 11 Q373 8 378 9 Q382 11 380 14 Q378 16 375 14 Q374 12 377 12" stroke="#a0a0a0"/>
 <path d="M403 6 H413 V13 M403 6 V17 L407 20" stroke="#a8a8a8"/><circle cx="412.5" cy="17.5" r="4" fill="#888" stroke="#a8a8a8"/>
 <path d="M425 19 V8 H430 L432 10 H436 M425 19 L428 12 H440 L437 19 Z" fill="#9a9a9a" stroke="#a8a8a8"/><circle cx="437.5" cy="7.5" r="1.3" fill="#bbb" stroke="none"/>
 <path d="M449 16 L452 9 H455 M462 9 H465 L468 16 M449 16 H468 V20 H449 Z" fill="none" stroke="#a8a8a8" stroke-width="1.4"/><rect x="449" y="16" width="19" height="4" fill="#a8a8a8" stroke="none"/><path d="M456 4 V11 M454 10 L456 12 L458 10" stroke="#bbb" stroke-width="1.6"/>
 <path d="M473 10 L476.5 6 L480 10 M473 15 L476.5 19 L480 15" stroke="#9a9a9a"/>
 <path d="M499 9 H507 Q511 9 511 13 Q511 18 507 18 H498" stroke="#b0b0b0" stroke-width="1.5"/><path d="M497 9 L502 5.5 V12.5 Z" fill="#c0c0c0" stroke="#c0c0c0"/>
 <path d="M534 9 H527 Q523 9 523 13 Q523 18 527 18 H535" stroke="#555" stroke-width="1.5"/><path d="M535 9 L530 5.5 V12.5 Z" fill="#5a5a5a" stroke="#5a5a5a"/>
 <g stroke="#bdbdbd" stroke-width="1.8"><path d="M560.5 5 V7.5 M560.5 17.5 V20 M553 12.5 H555.5 M565.5 12.5 H568 M555.2 7.2 L557 9 M564 16 L565.8 17.8 M555.2 17.8 L557 16 M564 9 L565.8 7.2"/></g>
 <g stroke="#bdbdbd" stroke-width="1.3"><path d="M557.5 5.7 L558.3 7.7 M563.5 5.7 L562.7 7.7 M557.5 19.3 L558.3 17.3 M563.5 19.3 L562.7 17.3 M553.7 9.5 L555.7 10.3 M553.7 15.5 L555.7 14.7 M567.3 9.5 L565.3 10.3 M567.3 15.5 L565.3 14.7"/></g>
 <rect x="576.5" y="6.5" width="11" height="13" stroke="#4e4e4e"/><path d="M580 9 V17 M583 9 V17" stroke="#4e4e4e"/>
 <path d="M608 6 L616 13 L609 20 L601 13 Z" fill="#c4c4c4" stroke="#c4c4c4"/><path d="M602 13 Q599 16 601 18" stroke="#c0c0c0" stroke-width="2"/><path d="M604 10 L608 6 L612 10" stroke="#c4c4c4"/>
 <rect x="626.5" y="8.5" width="12" height="11" stroke="#bdbdbd" stroke-dasharray="2 1.2"/><path d="M632.5 4 V8" stroke="#bdbdbd"/><circle cx="632.5" cy="4.5" r="1.3" fill="#bdbdbd" stroke="none"/>
 <rect x="656.5" y="6.5" width="14" height="13" stroke="#4a4a4a"/><path d="M657 7 L670 19" stroke="#4a4a4a"/>
 <rect x="680.5" y="6.5" width="14" height="13" stroke="#4a4a4a"/><path d="M681 19 L694 7 V19 Z" fill="#5a5a5a" stroke="none"/>
 <path d="M718 9 L724.5 15.5 L731 9" stroke="#cfcfcf" stroke-width="1.6"/>
 <path d="M720 32 L724.5 36.5 L729 32" stroke="#bdbdbd" stroke-width="1.4"/>
</svg>

<!-- ===== layer header ===== -->
<div class="a" style="left:736px;top:18px;width:257px;height:4px;background:#2e2e2e"></div>
<div class="a" style="left:736px;top:36px;width:254px;height:3px;background:#474747"></div>
<div class="a" style="left:736px;top:22px;width:20px;height:14px;background:#2b2b2b"></div>
<div class="a" style="left:757px;top:22px;width:49px;height:17px;background:#3b3b3b"></div>
<div class="t" style="left:781px;top:27px;font-size:8.5px;font-weight:bold;color:#d4d4d4">Layer</div>
<div class="a" style="left:737px;top:39px;width:35px;height:21px;background:#535353;border-radius:2px"></div>
<div class="a" style="left:773px;top:39px;width:90px;height:21px;background:#595959;border-radius:2px"></div>
<div class="t" style="left:797px;top:46px;font-size:9px;font-weight:bold;color:#e0e0e0">Normal</div>
<div class="a" style="left:868px;top:44px;width:86px;height:7px;background:repeating-conic-gradient(#f2f2f2 0 25%,#bdbdbd 0 50%) 0 0/7px 7px"></div>
<div class="a" style="left:868px;top:44px;width:86px;height:7px;background:linear-gradient(to right,rgba(220,220,220,0),rgba(220,220,220,.9))"></div>
<div class="a" style="left:954px;top:39px;width:3px;height:18px;background:#5e5e5e;border-radius:1px"></div>
<div class="t" style="left:961px;top:43px;font-size:9.5px;font-weight:bold;color:#e4e4e4">100</div>
<div class="a" style="left:959px;top:61px;width:31px;height:21px;background:#555555;border-radius:2px"></div>
<div class="a" style="left:963px;top:65px;width:9px;height:9px;background:#3a7ee4"></div>
<div class="a" style="left:967px;top:70px;width:9px;height:9px;background:#f4f4f4"></div>
<div class="a" style="left:963px;top:65px;width:9px;height:9px;background:#3a7ee4;clip-path:polygon(0 0,100% 0,100% 55%,45% 55%,45% 100%,0 100%)"></div>
<div class="a" style="left:736px;top:106px;width:254px;height:1px;background:#2e2e2e"></div>
<svg class="a" style="left:0;top:0" width="1024" height="576" viewBox="0 0 1024 576" fill="none" stroke="#a8a8a8" stroke-width="1.1" stroke-linecap="round" stroke-linejoin="round">
 <path d="M745 24.5 H750 M745 27 H750 M745 29.5 H750" stroke="#6a6a6a" stroke-width="0.9"/>
 <path d="M769 25 L775 28.5 V32 L769 35.5 L763 32 V28.5 Z" stroke="#a0a0a0"/><path d="M763 34 L769 37.5 L775 34 M766 30.5 L769 28.5 L772 30.5" stroke="#a0a0a0"/>
 <rect x="741.5" y="44.5" width="13" height="11" rx="2" stroke="#999"/>
 <path d="M761 48 L764.5 44.5 L768 48 M761 52 L764.5 55.5 L768 52" stroke="#8a8a8a"/>
 <path d="M852 47 L856 43 L860 47 M852 52 L856 56 L860 52" stroke="#8a8a8a"/>
 <path d="M981 46 L984 43 L987 46 M981 50 L984 53 L987 50" stroke="#9a9a9a"/>
 <path d="M981 69 L984 66 L987 69 M981 74 L984 77 L987 74" stroke="#8a8a8a"/>
 <!-- row1 -->
 <rect x="783.5" y="66.5" width="9" height="9" stroke-dasharray="1.5 1" stroke="#999"/><rect x="780" y="69" width="9" height="9" fill="#7a7a7a" stroke="#8a8a8a"/>
 <path d="M804 68 L816 68 M806 66 L810 68 L814 66 M808 70 H812 L814 77 H806 Z" fill="#bbb" stroke="#bbb"/>
 <path d="M830 65 H836 V72 L833 76 H830 Z" fill="#8a8a8a" stroke="#aaa"/><path d="M834 77 H840" stroke="#999"/>
 <path d="M856 71 V68.5 Q856 65.5 860 65.5 Q864 65.5 864 68.5 V71" stroke="#bdbdbd" stroke-width="1.5"/><rect x="854.5" y="71" width="11" height="7" rx="1" fill="#c4c4c4" stroke="none"/>
 <rect x="877.5" y="71" width="7" height="6" fill="#c8c8c8" stroke="none"/><path d="M879 71 V68 Q881 66 883 68 V71" stroke="#bbb"/><rect x="884" y="66" width="3" height="3" fill="#c0c0c0" stroke="none"/><rect x="887" y="70" width="2.5" height="2.5" fill="#c0c0c0" stroke="none"/><rect x="886" y="74" width="3" height="3" fill="#c0c0c0" stroke="none"/>
 <rect x="900.5" y="66.5" width="10" height="10" stroke="#5c5c5c"/><path d="M916 70 L918.5 67 L921 70 M916 73 L918.5 76 L921 73" stroke="#5c5c5c"/>
 <path d="M932 66.5 H943 L932 77 Z" stroke="#5c5c5c"/><path d="M947 70 L949.5 67 L952 70 M947 73 L949.5 76 L952 73" stroke="#5c5c5c"/>
 <!-- row2 -->
 <rect x="742.5" y="89.5" width="12" height="12" rx="1" stroke="#999"/><path d="M743 93.5 H754 M743 97.5 H754" stroke="#999"/>
 <path d="M803 89 H815 V97 M803 89 V100 L806 102 H810" stroke="#aaa"/><circle cx="813.5" cy="100" r="3" fill="#3c3c3c" stroke="#aaa"/>
 <rect x="827.5" y="88.5" width="12" height="12" stroke="#aaa"/><path d="M831 98 V94 L833.5 91 L836 94 V98" stroke="#999"/><circle cx="838" cy="100" r="3" fill="#3c3c3c" stroke="#aaa"/>
 <path d="M851 101 V89 H856 L858 91 H864 V101 Z" fill="#a8a8a8" stroke="#aaa"/><circle cx="863" cy="100" r="3" fill="#3c3c3c" stroke="#aaa"/>
 <rect x="878.5" y="88.5" width="9" height="9" stroke="#575757"/><rect x="874.5" y="93.5" width="8" height="8" stroke="#575757"/>
 <rect x="902.5" y="88.5" width="9" height="9" stroke="#575757"/><rect x="898.5" y="93.5" width="8" height="8" stroke="#575757"/>
 <rect x="923" y="89" width="13" height="12" rx="1" fill="#dedede" stroke="none"/><circle cx="929.5" cy="95" r="3" fill="#333" stroke="none"/>
 <rect x="947.5" y="90.5" width="14" height="10" stroke="#575757"/><path d="M954 91 V100" stroke="#575757"/>
 <path d="M972.5 92 H984.5 M974 92 V101 H983 V92 M976 90 H981" stroke="#a0a0a0"/><path d="M977 94 V99 M980 94 V99" stroke="#999" stroke-width="0.8"/>
</svg>

<!-- ===== layer list ===== -->
<div class="a" style="left:736px;top:107px;width:248px;height:469px;background:#343434"></div>
<div class="a" style="left:758px;top:107px;width:1px;height:279px;background:#2a2a2a"></div>
<div class="a" style="left:779px;top:107px;width:1px;height:279px;background:#2a2a2a"></div>
<div class="a" style="left:984px;top:107px;width:2px;height:469px;background:#2a2a2a"></div>
<div class="a" style="left:986px;top:107px;width:4px;height:469px;background:#363636"></div>
<div class="a" style="left:990px;top:18px;width:2px;height:558px;background:#3a3a3a"></div>
<div class="a" style="left:992px;top:18px;width:3px;height:558px;background:#2a2a2a"></div>
<div class="a" style="left:791px;top:136px;width:193px;height:1px;background:#262626"></div>
<div class="a" style="left:816px;top:172px;width:168px;height:1px;background:#262626"></div>
<div class="a" style="left:816px;top:207px;width:168px;height:1px;background:#262626"></div>
<div class="a" style="left:816px;top:243px;width:168px;height:1px;background:#262626"></div>
<div class="a" style="left:816px;top:279px;width:168px;height:1px;background:#262626"></div>
<div class="a" style="left:816px;top:314px;width:168px;height:1px;background:#262626"></div>
<div class="a" style="left:780px;top:350px;width:204px;height:1px;background:#262626"></div>
<div class="a" style="left:736px;top:385px;width:248px;height:1px;background:#262626"></div>
<div class="a" style="left:780px;top:315px;width:204px;height:35px;background:#57617b"></div>
<div class="a" style="left:816px;top:141px;width:28px;height:28px;background:repeating-conic-gradient(#ffffff 0 25%,#cfcfcf 0 50%) 0 0/7px 7px"></div>
<div class="a" style="left:820px;top:176px;width:28px;height:28px;background:repeating-conic-gradient(#ffffff 0 25%,#cfcfcf 0 50%) 0 0/7px 7px"></div>
<div class="a" style="left:820px;top:212px;width:28px;height:28px;background:repeating-conic-gradient(#ffffff 0 25%,#cfcfcf 0 50%) 0 0/7px 7px"></div>
<div class="a" style="left:820px;top:247px;width:28px;height:28px;background:repeating-conic-gradient(#ffffff 0 25%,#cfcfcf 0 50%) 0 0/7px 7px"></div>
<div class="a" style="left:820px;top:283px;width:28px;height:28px;background:repeating-conic-gradient(#ffffff 0 25%,#cfcfcf 0 50%) 0 0/7px 7px"></div>
<div class="a" style="left:818px;top:316px;width:32px;height:32px;border:1px solid #c8ccd8;background:#57617b"></div>
<div class="a" style="left:820px;top:318px;width:28px;height:28px;background:repeating-conic-gradient(#ffffff 0 25%,#cfcfcf 0 50%) 0 0/7px 7px"></div>
<div class="a" style="left:785px;top:354px;width:28px;height:28px;background:#fdfdfd"></div>
<div class="t" style="left:826px;top:113px;font-size:9px;font-weight:bold;color:#cfcfcf">100 %&nbsp; Normal</div>
<div class="t" style="left:826px;top:124px;font-size:9px;font-weight:bold;color:#cfcfcf">ANIMATION : 1</div>
<div class="t" style="left:874px;top:142px;font-size:9px;font-weight:bold;color:#cfcfcf">100 %&nbsp; Normal</div>
<div class="t" style="left:852px;top:159px;font-size:9px;font-weight:bold;color:#cfcfcf">1</div>
<div class="t" style="left:856px;top:178px;font-size:9px;font-weight:bold;color:#cfcfcf">100 %&nbsp; Normal</div>
<div class="t" style="left:856px;top:194px;font-size:9px;font-weight:bold;color:#cfcfcf">LINE</div>
<div class="t" style="left:856px;top:213.5px;font-size:9px;font-weight:bold;color:#cfcfcf">100 %&nbsp; Normal</div>
<div class="t" style="left:856px;top:229.5px;font-size:9px;font-weight:bold;color:#cfcfcf">LIGHT</div>
<div class="t" style="left:856px;top:249px;font-size:9px;font-weight:bold;color:#cfcfcf">100 %&nbsp; Normal</div>
<div class="t" style="left:856px;top:265px;font-size:9px;font-weight:bold;color:#cfcfcf">SHADING</div>
<div class="t" style="left:856px;top:284.5px;font-size:9px;font-weight:bold;color:#cfcfcf">100 %&nbsp; Normal</div>
<div class="t" style="left:856px;top:300.5px;font-size:9px;font-weight:bold;color:#cfcfcf">COLOR</div>
<div class="t" style="left:856px;top:320px;font-size:9px;font-weight:bold;color:#cfcfcf">100 %&nbsp; Normal</div>
<div class="t" style="left:856px;top:336px;font-size:9px;font-weight:bold;color:#cfcfcf">SKETCH</div>
<div class="t" style="left:821px;top:371.5px;font-size:9px;font-weight:bold;color:#cfcfcf">Paper</div>
<svg class="a" style="left:0;top:0" width="1024" height="576" viewBox="0 0 1024 576" fill="none" stroke="#a8a8a8" stroke-width="1.2" stroke-linecap="round" stroke-linejoin="round">
 <path d="M741 123.0 Q747 117.5 753 123.0 Q747 128.5 741 123.0 Z" fill="#8c8c8c" stroke="#b8b8b8" stroke-width="1.2"/><circle cx="747" cy="123.0" r="2.2" fill="#eeeeee" stroke="none"/>
 <path d="M741 154.0 Q747 148.5 753 154.0 Q747 159.5 741 154.0 Z" fill="#8c8c8c" stroke="#b8b8b8" stroke-width="1.2"/><circle cx="747" cy="154.0" r="2.2" fill="#eeeeee" stroke="none"/>
 <path d="M741 189.5 Q747 184.0 753 189.5 Q747 195.0 741 189.5 Z" fill="#8c8c8c" stroke="#b8b8b8" stroke-width="1.2"/><circle cx="747" cy="189.5" r="2.2" fill="#eeeeee" stroke="none"/>
 <path d="M741 225.5 Q747 220.0 753 225.5 Q747 231.0 741 225.5 Z" fill="#8c8c8c" stroke="#b8b8b8" stroke-width="1.2"/><circle cx="747" cy="225.5" r="2.2" fill="#eeeeee" stroke="none"/>
 <path d="M741 260.5 Q747 255.0 753 260.5 Q747 266.0 741 260.5 Z" fill="#8c8c8c" stroke="#b8b8b8" stroke-width="1.2"/><circle cx="747" cy="260.5" r="2.2" fill="#eeeeee" stroke="none"/>
 <path d="M741 296.5 Q747 291.0 753 296.5 Q747 302.0 741 296.5 Z" fill="#8c8c8c" stroke="#b8b8b8" stroke-width="1.2"/><circle cx="747" cy="296.5" r="2.2" fill="#eeeeee" stroke="none"/>
 <path d="M741 332.0 Q747 326.5 753 332.0 Q747 337.5 741 332.0 Z" fill="#8c8c8c" stroke="#b8b8b8" stroke-width="1.2"/><circle cx="747" cy="332.0" r="2.2" fill="#eeeeee" stroke="none"/>
 <path d="M741 367.5 Q747 362.0 753 367.5 Q747 373.0 741 367.5 Z" fill="#8c8c8c" stroke="#b8b8b8" stroke-width="1.2"/><circle cx="747" cy="367.5" r="2.2" fill="#eeeeee" stroke="none"/>
 <rect x="765.5" y="118.5" width="7" height="8" rx="1.5" stroke="#3a3a3a"/>
 <rect x="765.5" y="149.5" width="7" height="8" rx="1.5" stroke="#3a3a3a"/>
 <rect x="765.5" y="185" width="7" height="8" rx="1.5" stroke="#3a3a3a"/>
 <rect x="765.5" y="221" width="7" height="8" rx="1.5" stroke="#3a3a3a"/>
 <rect x="765.5" y="256" width="7" height="8" rx="1.5" stroke="#3a3a3a"/>
 <rect x="765.5" y="292" width="7" height="8" rx="1.5" stroke="#3a3a3a"/>
 <rect x="765.5" y="363" width="7" height="8" rx="1.5" stroke="#3a3a3a"/>
 <path d="M762.5 337 H773.5 M762.5 337 L771.5 328" stroke="#d0d0d0" stroke-width="1.3"/>
 <path d="M785 122 L788.5 125.5 L792 122" stroke="#bdbdbd" stroke-width="1.4"/>
 <path d="M799 154 L802.5 157.5 L806 154" stroke="#a8a8a8" stroke-width="1.3"/>
 <rect x="806" y="117" width="11" height="8" rx="1" fill="#3c3c3c" stroke="#bbb"/><path d="M803.5 120 V127.5 H815" stroke="#bbb"/><path d="M808 122 H815" stroke="#999" stroke-width="0.8"/><rect x="806" y="124" width="11" height="3" fill="#bbb" stroke="none"/>
 <path d="M857 152 V145 H861 L862.5 146.5 H867 V148 M857 152 L859 148 H870 L868 152 Z" fill="#a8a8a8" stroke="#b0b0b0"/>
 <rect x="824" y="354" width="16" height="15" rx="1" fill="#e8e8e8" stroke="none"/><path d="M829 357 H835 V364 H827 V359 Z" fill="#444" stroke="none"/><path d="M831 358 V363 H834" stroke="#e8e8e8" stroke-width="0.8"/>
 <path d="M906 323 L918 330 L912 331 L909 337 Z" fill="#b8bccc" stroke="#b8bccc" stroke-width="1"/>
 <path d="M973 119.5 H980 M973 122 H980 M973 124.5 H980" stroke="#3c3c3c" stroke-width="1"/>
 <path d="M973 150.5 H980 M973 153 H980 M973 155.5 H980" stroke="#3c3c3c" stroke-width="1"/>
 <path d="M973 186.5 H980 M973 189 H980 M973 191.5 H980" stroke="#3c3c3c" stroke-width="1"/>
 <path d="M973 222.5 H980 M973 225 H980 M973 227.5 H980" stroke="#3c3c3c" stroke-width="1"/>
 <path d="M973 257.5 H980 M973 260 H980 M973 262.5 H980" stroke="#3c3c3c" stroke-width="1"/>
 <path d="M973 293.5 H980 M973 296 H980 M973 298.5 H980" stroke="#3c3c3c" stroke-width="1"/>
 <path d="M973 329.5 H980 M973 332 H980 M973 334.5 H980" stroke="#3a3a44" stroke-width="1"/>
 <path d="M973 364.5 H980 M973 367 H980 M973 369.5 H980" stroke="#3c3c3c" stroke-width="1"/>
</svg>

<!-- ===== right column ===== -->
<div class="a" style="left:995px;top:18px;width:29px;height:558px;background:#313131"></div>
<div class="a" style="left:995px;top:18px;width:29px;height:218px;background:#2a2a2a"></div>
<div class="a" style="left:995px;top:18px;width:29px;height:31px;background:#3e3e3e"></div>
<div class="a" style="left:995px;top:55px;width:29px;height:31px;background:#3e3e3e"></div>
<div class="a" style="left:995px;top:95px;width:29px;height:24px;background:#3e3e3e"></div>
<div class="a" style="left:995px;top:127px;width:29px;height:32px;background:#3e3e3e"></div>
<div class="a" style="left:995px;top:164px;width:29px;height:30px;background:#3e3e3e"></div>
<div class="a" style="left:995px;top:200px;width:29px;height:31px;background:#3e3e3e"></div>
<svg class="a" style="left:0;top:0" width="1024" height="576" viewBox="0 0 1024 576" fill="none" stroke="#7c7c7c" stroke-width="1.1" stroke-linecap="round" stroke-linejoin="round">
 <path d="M996 5 L999 7.5 L996 10" stroke="#666"/>
 <path d="M1019 5 L1022 7.5 L1019 10 M1023 5 L1026 7.5 L1023 10" stroke="#666"/>
 <rect x="739" y="3" width="2" height="10" fill="#4a4a4a" stroke="none"/>
 <circle cx="1009" cy="34" r="6.5"/><path d="M1007 32 L1012 37 M1007 32 V35 M1007 32 H1010" stroke-width="1.4"/>
 <path d="M1002 77 V64 H1007 L1009 66 H1017 V77 Z"/><path d="M1009.5 68 V74 M1007 72 L1009.5 74.5 L1012 72"/>
 <path d="M1009 99 L1016 103 L1009 107 L1002 103 Z M1002 106.5 L1009 110.5 L1016 106.5 M1002 110 L1009 114 L1016 110" stroke="#a8a8a8"/>
 <rect x="1002.5" y="138.5" width="13" height="10"/><path d="M1002 136 L1014 133 M1007 141 V146 L1011 143.5 Z" /><path d="M1007 141 V146 L1011 143.5 Z" fill="#8e8e8e"/>
 <path d="M1006 172 L1010 170 L1014 172 L1010 174 Z M1002 176 H1008 V186 H1002 Z M1008 178 H1015 V186 H1008" stroke="#777"/>
 <path d="M1003 209 H1015 V223 H1003 Z M1001 211 V221" stroke="#666"/><path d="M1004 213 H1014 M1004 216 H1014 M1004 219 H1014" stroke="#555" stroke-width="0.8"/>
</svg>

<!-- ===== timeline ===== -->
<div class="a" style="left:256px;top:425px;width:480px;height:20px;background:#2c2c2c"></div>
<div class="a" style="left:295px;top:432px;width:61px;height:13px;background:#3b3b3b"></div>
<div class="t" style="left:319px;top:435px;font-size:8.5px;font-weight:bold;color:#d4d4d4">Timeline</div>
<div class="a" style="left:274px;top:445px;width:461px;height:24px;background:#434343"></div>
<div class="a" style="left:551px;top:447px;width:24px;height:22px;background:#56617f"></div>
<div class="a" style="left:256px;top:469px;width:18px;height:107px;background:#2e2e2e"></div>
<div class="a" style="left:274px;top:469px;width:461px;height:107px;background:#353535"></div>
<div class="a" style="left:274px;top:470px;width:118px;height:23px;background:#595959;border-radius:2px"></div>
<div class="t" style="left:306px;top:477.5px;font-size:9px;font-weight:bold;color:#e0e0e0">Timeline 1</div>
<div class="a" style="left:274px;top:494px;width:18px;height:82px;background:#444444"></div>
<div class="a" style="left:292px;top:494px;width:104px;height:23px;background:#4f5a73"></div>
<div class="t" style="left:329px;top:502.5px;font-size:7.6px;font-weight:bold;letter-spacing:-0.25px;color:#cdd1dc">ANIMATION : 1</div>
<div class="a" style="left:292px;top:517px;width:57px;height:57px;background:#9a9a9a"></div>
<div class="a" style="left:294px;top:519px;width:53px;height:53px;background:#fdfdfd"></div>
<div class="a" style="left:392px;top:469px;width:4px;height:107px;background:#2c2c2c"></div>
<div class="a" style="left:396px;top:469px;width:7px;height:107px;background:#404040"></div>
<div class="a" style="left:403px;top:469px;width:10px;height:25px;background:#2f7bd0"></div>
<div class="a" style="left:403px;top:494px;width:10px;height:82px;background:#383d44"></div>
<div class="a" style="left:413px;top:469px;width:1px;height:107px;background:#c8d0e0"></div>
<div class="a" style="left:428px;top:469px;width:296px;height:25px;background:#434343"></div>
<div class="a" style="left:569px;top:469px;width:155px;height:25px;background:#53566a"></div>
<div class="a" style="left:414px;top:469px;width:14px;height:25px;background:#b82a32"></div>
<div class="a" style="left:414px;top:494px;width:14px;height:82px;background:#6e2a2e"></div>
<div class="a" style="left:569px;top:501px;width:155px;height:75px;background:#3a3b42"></div>
<div class="a" style="left:414px;top:494px;width:310px;height:1px;background:#8a8a8a"></div>
<div class="a" style="left:414px;top:500px;width:310px;height:1px;background:#8a8a8a"></div>
<div class="a" style="left:724px;top:469px;width:10px;height:25px;background:#2f7bd0"></div>
<div class="a" style="left:724px;top:494px;width:4px;height:82px;background:#4a5a70"></div>
<div class="a" style="left:728px;top:494px;width:6px;height:82px;background:#4a4a4a"></div>
<div class="a" style="left:734px;top:424px;width:2px;height:152px;background:#262626"></div>
<div class="a" style="left:414px;top:518px;width:56px;height:55px;background:#fdfdfd"></div>
<div class="t" style="left:416px;top:472px;font-size:9px;font-weight:bold;color:#f0d0d0">0</div>
<div class="t" style="left:416px;top:483px;font-size:9px;font-weight:bold;color:#f0d0d0">1</div>
<div class="t" style="left:455.5px;top:483px;font-size:9.5px;font-weight:bold;color:#e6e6e6">4</div>
<div class="t" style="left:494.5px;top:483px;font-size:9.5px;font-weight:bold;color:#e6e6e6">7</div>
<div class="t" style="left:531px;top:483px;font-size:9.5px;font-weight:bold;color:#e6e6e6">10</div>
<div class="t" style="left:570px;top:483px;font-size:9.5px;font-weight:bold;color:#e6e6e6">13</div>
<div class="t" style="left:609px;top:483px;font-size:9.5px;font-weight:bold;color:#e6e6e6">16</div>
<div class="t" style="left:648px;top:483px;font-size:9.5px;font-weight:bold;color:#e6e6e6">19</div>
<div class="t" style="left:687px;top:483px;font-size:9.5px;font-weight:bold;color:#e6e6e6">22</div>
<div class="t" style="left:572.5px;top:472px;font-size:9.5px;font-weight:bold;color:#e6e6e6">1</div>
<svg class="a" style="left:0;top:0" width="1024" height="576" viewBox="0 0 1024 576" fill="none" stroke="#777" stroke-width="1">
 <path d="M432.5 491 V494" stroke="#555"/>
 <path d="M445.5 491 V494" stroke="#555"/>
 <path d="M471.5 491 V494" stroke="#555"/>
 <path d="M484.5 491 V494" stroke="#555"/>
 <path d="M510.5 491 V494" stroke="#555"/>
 <path d="M523.5 491 V494" stroke="#555"/>
 <path d="M549.5 491 V494" stroke="#555"/>
 <path d="M562.5 491 V494" stroke="#555"/>
 <path d="M588.5 491 V494" stroke="#555"/>
 <path d="M601.5 491 V494" stroke="#555"/>
 <path d="M627.5 491 V494" stroke="#555"/>
 <path d="M640.5 491 V494" stroke="#555"/>
 <path d="M666.5 491 V494" stroke="#555"/>
 <path d="M679.5 491 V494" stroke="#555"/>
 <path d="M705.5 491 V494" stroke="#555"/>
 <path d="M718.5 491 V494" stroke="#555"/>
 <path d="M418.5 495 V500" stroke="#bbb"/><path d="M720.5 495 V500" stroke="#bbb" stroke-width="2"/>
</svg>
<div class="t" style="left:437px;top:536px;font-size:22px;letter-spacing:0.3px;transform:scaleY(1.12);transform-origin:0 100%;font-weight:bold;color:rgba(186,182,216,0.68);text-shadow:1px 1px 1px rgba(100,96,140,0.5)">@kevinfm_art</div>
<svg class="a" style="left:0;top:0" width="1024" height="576" viewBox="0 0 1024 576" fill="none" stroke="#a8a8a8" stroke-width="1.1" stroke-linecap="round" stroke-linejoin="round">
 <path d="M281 433.5 H287 M281 436 H287 M281 438.5 H287" stroke="#666" stroke-width="0.9"/>
 <rect x="300.5" y="434.5" width="11" height="12" stroke="#999"/><path d="M303.5 435 V446" stroke="#999"/><rect x="306" y="438" width="2" height="2" fill="#999" stroke="none"/><rect x="306" y="442" width="2" height="2" fill="#999" stroke="none"/>
 <rect x="281.5" y="452.5" width="12" height="12" stroke="#4e4e4e"/><path d="M284 462 L291 455" stroke="#4e4e4e"/>
 <rect x="313.5" y="452.5" width="11" height="12" stroke="#aaa"/><path d="M316.5 453 V464" stroke="#aaa"/><rect x="319" y="456" width="2" height="2" fill="#aaa" stroke="none"/><rect x="319" y="460" width="2" height="2" fill="#aaa" stroke="none"/>
 <rect x="336.5" y="452.5" width="11" height="12" stroke="#aaa"/><path d="M339.5 453 V464" stroke="#aaa"/><rect x="342" y="456" width="2" height="2" fill="#aaa" stroke="none"/><circle cx="348" cy="464" r="2.8" fill="#3b3b3b" stroke="#aaa"/>
 <circle cx="375" cy="457" r="4.5" stroke-width="1.4"/><path d="M378.5 460.5 L382 464" stroke-width="2"/><path d="M373 457 H377" />
 <circle cx="399" cy="457" r="4.5" stroke-width="1.4"/><path d="M402.5 460.5 L406 464" stroke-width="2"/><path d="M397 457 H401 M399 455 V459" />
 <path d="M430 453 V463" stroke="#555" stroke-width="1.5"/><path d="M438 453 L431 458 L438 463 Z" fill="#555" stroke="#555"/>
 <path d="M461 453 V463" stroke="#555" stroke-width="1.5"/><path d="M459 453 L452 458 L459 463 Z" fill="#555" stroke="#555"/>
 <path d="M477 452 L487 458 L477 464 Z" fill="#c8c8c8" stroke="#c8c8c8"/>
 <path d="M501 453 V463" stroke="#aaa" stroke-width="1.5"/><path d="M503 453 L510 458 L503 463 Z" fill="#bbb" stroke="#bbb"/>
 <path d="M534 453 V463" stroke="#bbb" stroke-width="1.5"/><path d="M526 453 L533 458 L526 463 Z" fill="#c8c8c8" stroke="#c8c8c8"/>
 <path d="M558 461 Q555 458 558 455 H567 M569 453 L567 455 M568 455 Q571 458 568 461 H559" stroke="#9aa8d0" stroke-width="1.4"/><circle cx="567" cy="454" r="1.2" fill="#cfd6ee" stroke="none"/><circle cx="559" cy="462" r="1.2" fill="#cfd6ee" stroke="none"/>
 <rect x="590.5" y="453.5" width="11" height="11" stroke="#aaa"/><path d="M589 456 V466 H599" stroke="#888"/><path d="M593 456 H599 M593 459 H599" stroke="#888" stroke-width="0.8"/><circle cx="601" cy="464" r="2.5" fill="#3b3b3b" stroke="#aaa"/>
 <rect x="613.5" y="453.5" width="11" height="11" rx="1" stroke="#aaa"/><path d="M615.5 455 L616.5 457 M618.5 455 L619.5 457 M621.5 455 L622.5 457" stroke="#aaa"/><circle cx="624.5" cy="464" r="2.5" fill="#3b3b3b" stroke="#aaa"/>
 <rect x="638.5" y="453.5" width="12" height="11" rx="1" stroke="#aaa"/><path d="M639 456 H650" stroke="#aaa"/><rect x="641" y="461" width="7" height="3" rx="1.5" fill="#3b3b3b" stroke="#aaa"/>
 <rect x="661.5" y="453.5" width="12" height="11" rx="1" stroke="#aaa"/><path d="M662 456 H673" stroke="#aaa"/><rect x="664" y="461" width="7" height="3" rx="1.5" fill="#3b3b3b" stroke="#aaa"/>
 <rect x="696.5" y="452.5" width="9" height="9" rx="1" stroke="#999"/><rect x="699.5" y="455.5" width="9" height="9" rx="1" fill="#3b3b3b" stroke="#999"/><path d="M702 457 V463 M704 457 V463 M706 457 V463" stroke="#999" stroke-width="0.7"/>
 <path d="M730 454 L733 456 V462" stroke="#4e4e4e"/>
 <path d="M381 479 L384.5 475.5 L388 479 M381 485 L384.5 488.5 L388 485" stroke="#999"/>
 <path d="M277.5 506 Q283 501 288.5 506 Q283 511 277.5 506 Z" fill="#c8c8c8" stroke="#c8c8c8" stroke-width="0.8"/><circle cx="283" cy="506" r="1.7" fill="#f0f0f0" stroke="none"/>
 <rect x="299.5" y="500.5" width="11" height="11" rx="1.5" stroke="#8a94aa"/><rect x="302" y="503" width="6" height="5" fill="#7a849a" stroke="none"/>
 <path d="M315.5 506 H322.5 M319 502.5 V509.5" stroke="#c0c4d0" stroke-width="1.3"/>
 <path d="M386 503 H393 M386 506 H393 M386 509 H393" stroke="#9aa0b0" stroke-width="1"/>
</svg>
</body></html>
